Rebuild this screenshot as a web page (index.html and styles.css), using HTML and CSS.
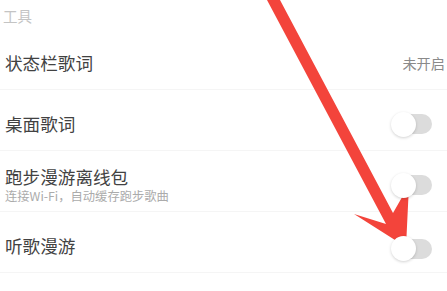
FILE: index.html
```html
<!DOCTYPE html>
<html lang="zh-CN">
<head>
<meta charset="utf-8">
<link rel="stylesheet" href="styles.css">
</head>
<body>
<div class="page">
  <div class="section-title">工具</div>
  <div class="row">
    <div class="label"><div class="title">状态栏歌词</div></div>
    <div class="value">未开启</div>
  </div>
  <div class="row">
    <div class="label"><div class="title">桌面歌词</div></div>
    <div class="toggle"><span class="knob"></span><span class="track"></span></div>
  </div>
  <div class="row">
    <div class="label">
      <div class="title">跑步漫游离线包</div>
      <div class="sub">连接Wi-Fi，自动缓存跑步歌曲</div>
    </div>
    <div class="toggle"><span class="knob"></span><span class="track"></span></div>
  </div>
  <div class="row">
    <div class="label"><div class="title">听歌漫游</div></div>
    <div class="toggle low"><span class="knob"></span><span class="track"></span></div>
  </div>
  <svg class="arrow" width="447" height="291" viewBox="0 0 447 291">
    <polygon points="267,0 280,0 393,213 409,185 406,247 354,214 386,224" fill="#f3443b"/>
  </svg>
</div>
</body>
</html>
```

FILE: styles.css
```css
* { box-sizing: border-box; }
html, body { margin: 0; padding: 0; background: #fff; }
body {
  width: 447px;
  height: 291px;
  overflow: hidden;
  font-family: "Noto Sans CJK SC", "Noto Sans", sans-serif;
}
.page {
  position: relative;
  width: 447px;
  height: 291px;
}
.section-title {
  height: 29px;
  padding-left: 3px;
  display: flex;
  align-items: center;
  padding-top: 2px;
  font-size: 14.5px;
  color: #c4c4c4;
}
.row {
  height: 61px;
  padding: 8px 15px 0 5px;
  display: flex;
  align-items: center;
  justify-content: space-between;
  border-bottom: 1px solid #f5f5f5;
}
.title {
  font-size: 17.6px;
  line-height: 22px;
  color: #424242;
}
.sub {
  font-size: 12.3px;
  line-height: 16px;
  color: #ababab;
}
.value {
  font-size: 14.2px;
  color: #8a8a8a;
  margin-right: -13px;
}
.toggle {
  position: relative;
  width: 41px;
  height: 25px;
  display: flex;
  align-items: center;
  justify-content: flex-end;
}
.toggle.low { margin-top: 5px; }
.track {
  width: 32px;
  height: 20px;
  border-radius: 10px;
  background: #dcdcdc;
}
.knob {
  position: absolute;
  left: 0;
  top: 0;
  width: 25px;
  height: 25px;
  border-radius: 50%;
  background: #fff;
  box-shadow: 0 1px 3px rgba(0,0,0,0.18);
  z-index: 1;
}
.arrow {
  position: absolute;
  left: 0;
  top: 0;
  pointer-events: none;
}
```
